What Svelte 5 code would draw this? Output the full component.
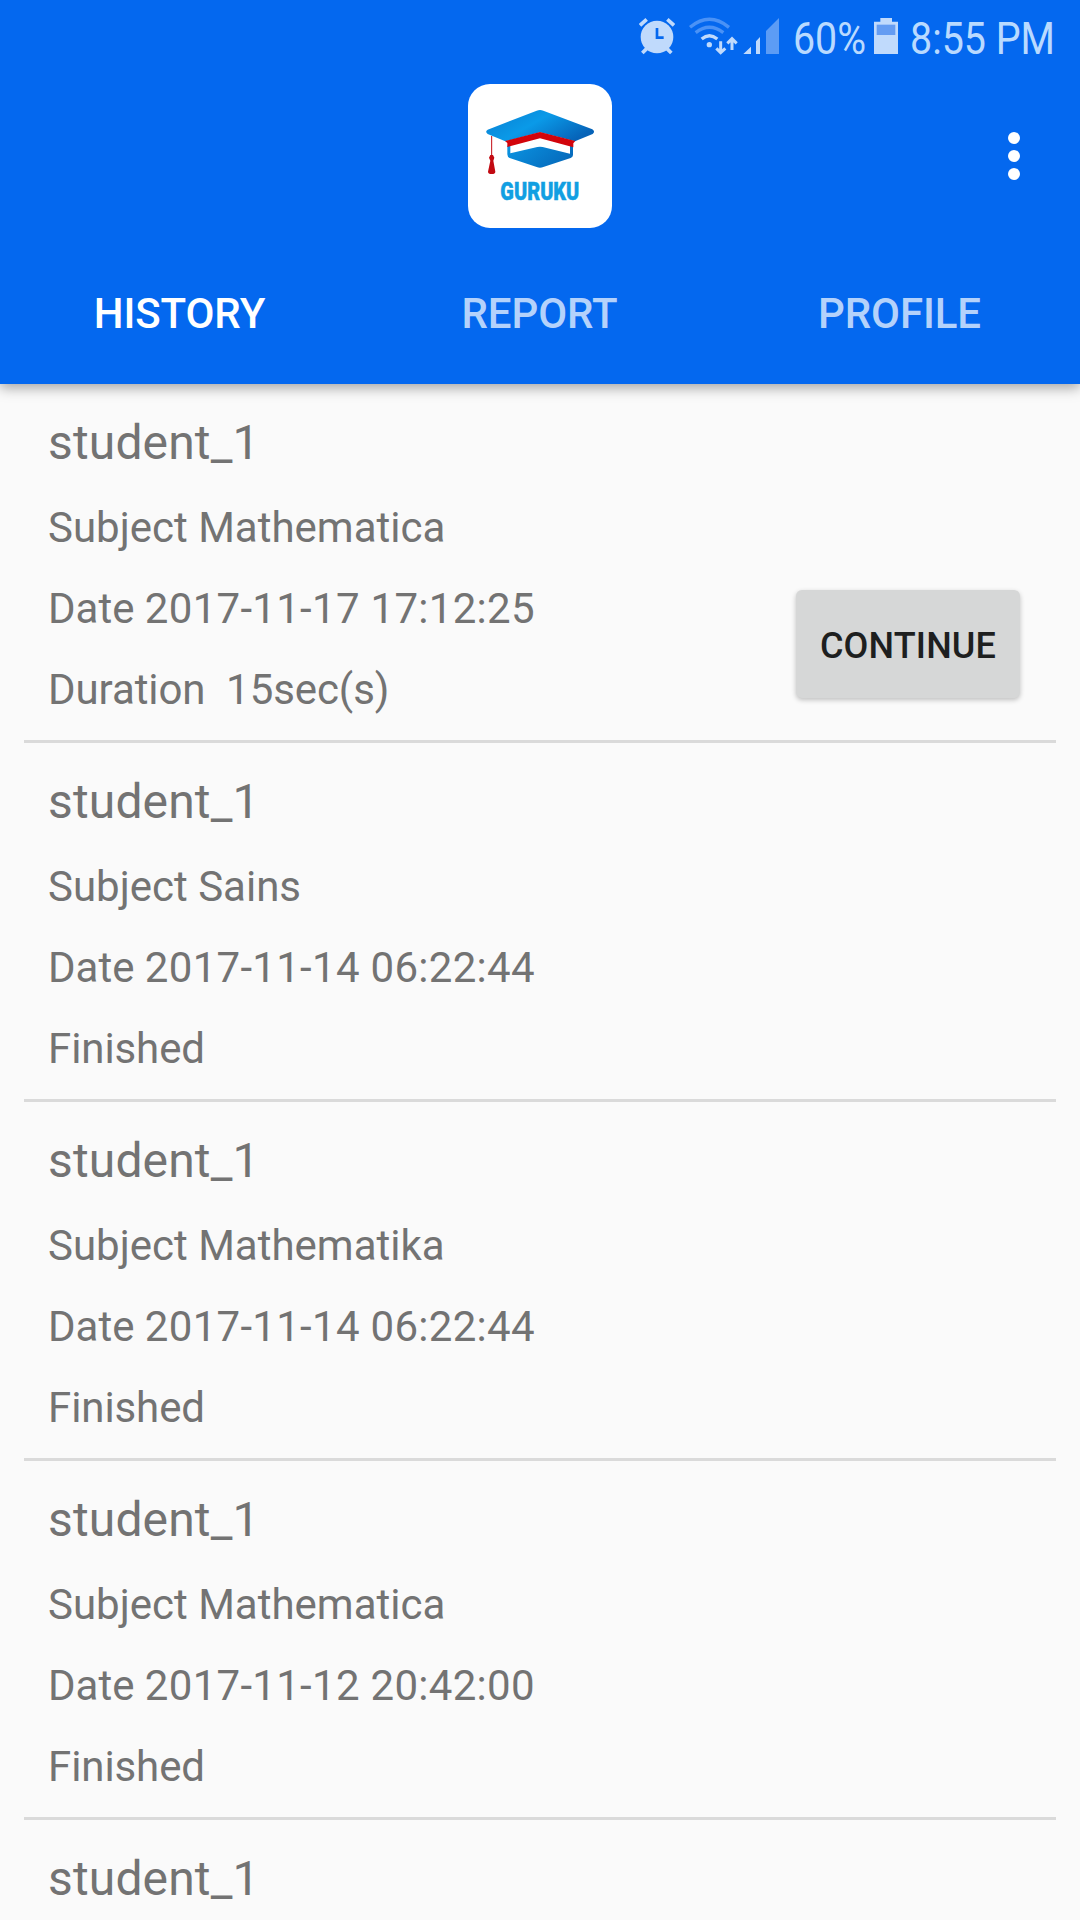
<script>
  const tabs = ['HISTORY', 'REPORT', 'PROFILE'];
  let active = $state('HISTORY');

  const entries = [
    { user: 'student_1', subject: 'Mathematica', date: '2017-11-17 17:12:25', status: 'Duration  15sec(s)', open: true },
    { user: 'student_1', subject: 'Sains', date: '2017-11-14 06:22:44', status: 'Finished' },
    { user: 'student_1', subject: 'Mathematika', date: '2017-11-14 06:22:44', status: 'Finished' },
    { user: 'student_1', subject: 'Mathematica', date: '2017-11-12 20:42:00', status: 'Finished' },
    { user: 'student_1' }
  ];
</script>

<div class="screen">
  <header>
    <div class="status">
      <svg class="alarm" viewBox="27 51 108 114">
        <circle cx="81" cy="111" r="49" />
        <path class="stroke" d="M30 76L50 58M112 58L132 76M37 159L50 146M124 159L111 146" stroke-width="11" />
        <path class="hand" d="M81 84V113H101" />
      </svg>
      <svg class="wifi" viewBox="174 51 150 114">
        <path class="arc dim" d="M180 82Q238 34 297 82M197 98Q238 66 280 98" />
        <path class="arc" d="M215 117Q238 98 262 117" />
        <circle cx="238" cy="134" r="8" />
        <path class="arrow" d="M272 124V156M259 145L272 158L286 145M306 150V118M292 130L306 116L320 130" />
      </svg>
      <svg class="signal" viewBox="339 51 111 114">
        <path d="M340 162L363 140V162ZM378 162V124L390 111V162Z" />
        <path class="dim-fill" d="M408 162V93L447 54V162Z" />
      </svg>
      <svg class="percent" viewBox="0 0 69 75"><text x="-2" y="53.5" textLength="73" lengthAdjust="spacingAndGlyphs">60%</text></svg>
      <svg class="battery" viewBox="72 51 72 114">
        <path d="M91 54H126V65H144V162H72V65H91Z" />
        <rect class="level" x="80" y="74" width="56" height="31" />
      </svg>
      <svg class="clock" viewBox="0 0 144 75"><text x="0" y="53.5" textLength="145" lengthAdjust="spacingAndGlyphs">8:55 PM</text></svg>
    </div>

    <div class="toolbar">
      <svg class="logo" viewBox="24 27 432 432">
        <defs>
          <linearGradient id="cap" x1="0" y1="0.1" x2="1" y2="0.6">
            <stop offset="0" stop-color="#0a7fd2" />
            <stop offset="0.48" stop-color="#0a9ae8" />
            <stop offset="1" stop-color="#0663b8" />
          </linearGradient>
          <linearGradient id="base" x1="0" y1="0" x2="1" y2="0.4">
            <stop offset="0" stop-color="#0a94e2" />
            <stop offset="1" stop-color="#066cbd" />
          </linearGradient>
        </defs>
        <rect x="24" y="27" width="432" height="432" rx="66" fill="#fff" />
        <path fill="url(#base)" d="M142 212H151V235L232 216Q240 214 248 216L330 236V212H339V240Q339 246 332 249L250 276Q240 280 230 276L149 249Q142 246 142 238Z" />
        <path fill="url(#cap)" d="M83 164L230 107Q240 103 250 107L397 163Q407 170 398 177L345 199L240 172L136 199L83 177Q74 170 83 164Z" />
        <path fill="#d2040b" d="M135 198L240 171L346 198L340 205V217L240 190L142 216V204Z" />
        <path fill="none" stroke="#c20a12" stroke-width="3" d="M95 183V242" />
        <path fill="#c20a12" d="M91 240H99L103 248L100 257L106 290Q106 297 95 297Q84 297 84 290L91 257L87 248Z" />
        <text class="brand" x="121" y="376" textLength="237" lengthAdjust="spacingAndGlyphs">GURUKU</text>
      </svg>
      <button class="more" aria-label="More options">
        <span class="dot"></span><span class="dot"></span><span class="dot"></span>
      </button>
    </div>

    <nav>
      {#each tabs as tab}
        <button class="tab" class:active={tab === active} onclick={() => (active = tab)}>{tab}</button>
      {/each}
    </nav>
  </header>

  <main>
    {#each entries as entry}
      <article>
        <div class="info">
          <h2>{entry.user}</h2>
          {#if entry.subject}
            <p>Subject {entry.subject}</p>
            <p>Date <span class="date">{entry.date}</span></p>
            <p class="state">{entry.status}</p>
          {/if}
        </div>
        {#if entry.open}
          <button class="continue">CONTINUE</button>
        {/if}
      </article>
    {/each}
  </main>
</div>

<style>
  :global(body) {
    margin: 0;
    background: #fafafa;
  }
  .screen {
    width: 1080px;
    height: 1920px;
    overflow: hidden;
    display: flex;
    flex-direction: column;
    background: #fafafa;
    font-family: Roboto, sans-serif;
    color: #737373;
  }
  button {
    border: 0;
    padding: 0;
    background: none;
    font-family: inherit;
  }
  header {
    flex: none;
    height: 384px;
    background: #0468ef;
    box-shadow: 0 4px 12px rgba(0, 0, 0, 0.34);
    z-index: 1;
  }
  .status {
    height: 72px;
    display: flex;
    box-sizing: border-box;
    padding-right: 26px;
    justify-content: flex-end;
    align-items: flex-start;
    fill: #c0dafc;
  }
  .status svg {
    display: block;
    height: 38px;
    margin-top: 17px;
  }
  .status .percent,
  .status .clock {
    height: 75px;
    margin-top: 0;
    overflow: visible;
    font-size: 45px;
    fill: #b9daff;
  }
  .alarm { width: 36px; margin-right: 13px; }
  .wifi { width: 50px; margin-right: 5px; }
  .signal { width: 37px; margin-right: 15px; }
  .percent { width: 69px; margin-right: 10px; }
  .battery { width: 24px; margin-right: 12px; }
  .clock { width: 144px; }
  .stroke { stroke: #c0dafc; }
  .hand { fill: none; stroke: #0468ef; stroke-width: 8; }
  .arc { fill: none; stroke: #c0dafc; stroke-width: 10; }
  .arc.dim { stroke: #4a92f6; }
  .dim-fill { fill: #5c9cf5; }
  .arrow { fill: none; stroke: #c0dafc; stroke-width: 9; }
  .level { fill: #649cf2; }

  .toolbar {
    height: 168px;
    display: grid;
    grid-template-columns: 1fr 144px 1fr;
    align-items: center;
  }
  .logo {
    grid-column: 2;
    display: block;
    width: 144px;
    height: 144px;
  }
  .brand {
    font-size: 79px;
    font-weight: 900;
    fill: #119fe2;
    stroke: #119fe2;
    stroke-width: 1.5;
  }
  .more {
    justify-self: end;
    width: 12px;
    margin-right: 60px;
    display: flex;
    flex-direction: column;
    gap: 6px;
  }
  .dot {
    width: 12px;
    height: 12px;
    border-radius: 50%;
    background: #fff;
  }
  nav {
    height: 144px;
    display: grid;
    grid-template-columns: repeat(3, 1fr);
  }
  .tab {
    padding: 3px 1px 0 0;
    font-size: 42px;
    font-weight: 500;
    letter-spacing: -0.1px;
    color: #b4d2fb;
  }
  .tab.active {
    color: #fff;
  }
  main {
    flex: 1;
    min-height: 0;
    padding: 0 24px;
  }
  article {
    height: 356px;
    display: flex;
    justify-content: space-between;
    align-items: flex-end;
    border-bottom: 3px solid #dadada;
  }
  article:last-child {
    height: auto;
    border-bottom: 0;
  }
  .info {
    padding: 15px 24px 10px;
  }
  article:last-child .info {
    padding-bottom: 0;
  }
  h2,
  p {
    margin: 0;
    font-weight: 400;
    white-space: pre;
  }
  h2 {
    font-size: 48px;
    line-height: 88px;
    letter-spacing: 0.15px;
  }
  p {
    font-size: 42px;
    line-height: 81px;
  }
  .date {
    letter-spacing: 0.29px;
  }
  .state {
    letter-spacing: -0.08px;
  }
  .continue {
    width: 224px;
    height: 108px;
    margin: 0 36px 42px 0;
    padding-top: 3px;
    border-radius: 6px;
    background: #d6d7d7;
    box-shadow: 0 2px 5px rgba(0, 0, 0, 0.24);
    color: #1e1f1f;
    font-size: 36px;
    font-weight: 500;
    letter-spacing: 0.15px;
  }
</style>
